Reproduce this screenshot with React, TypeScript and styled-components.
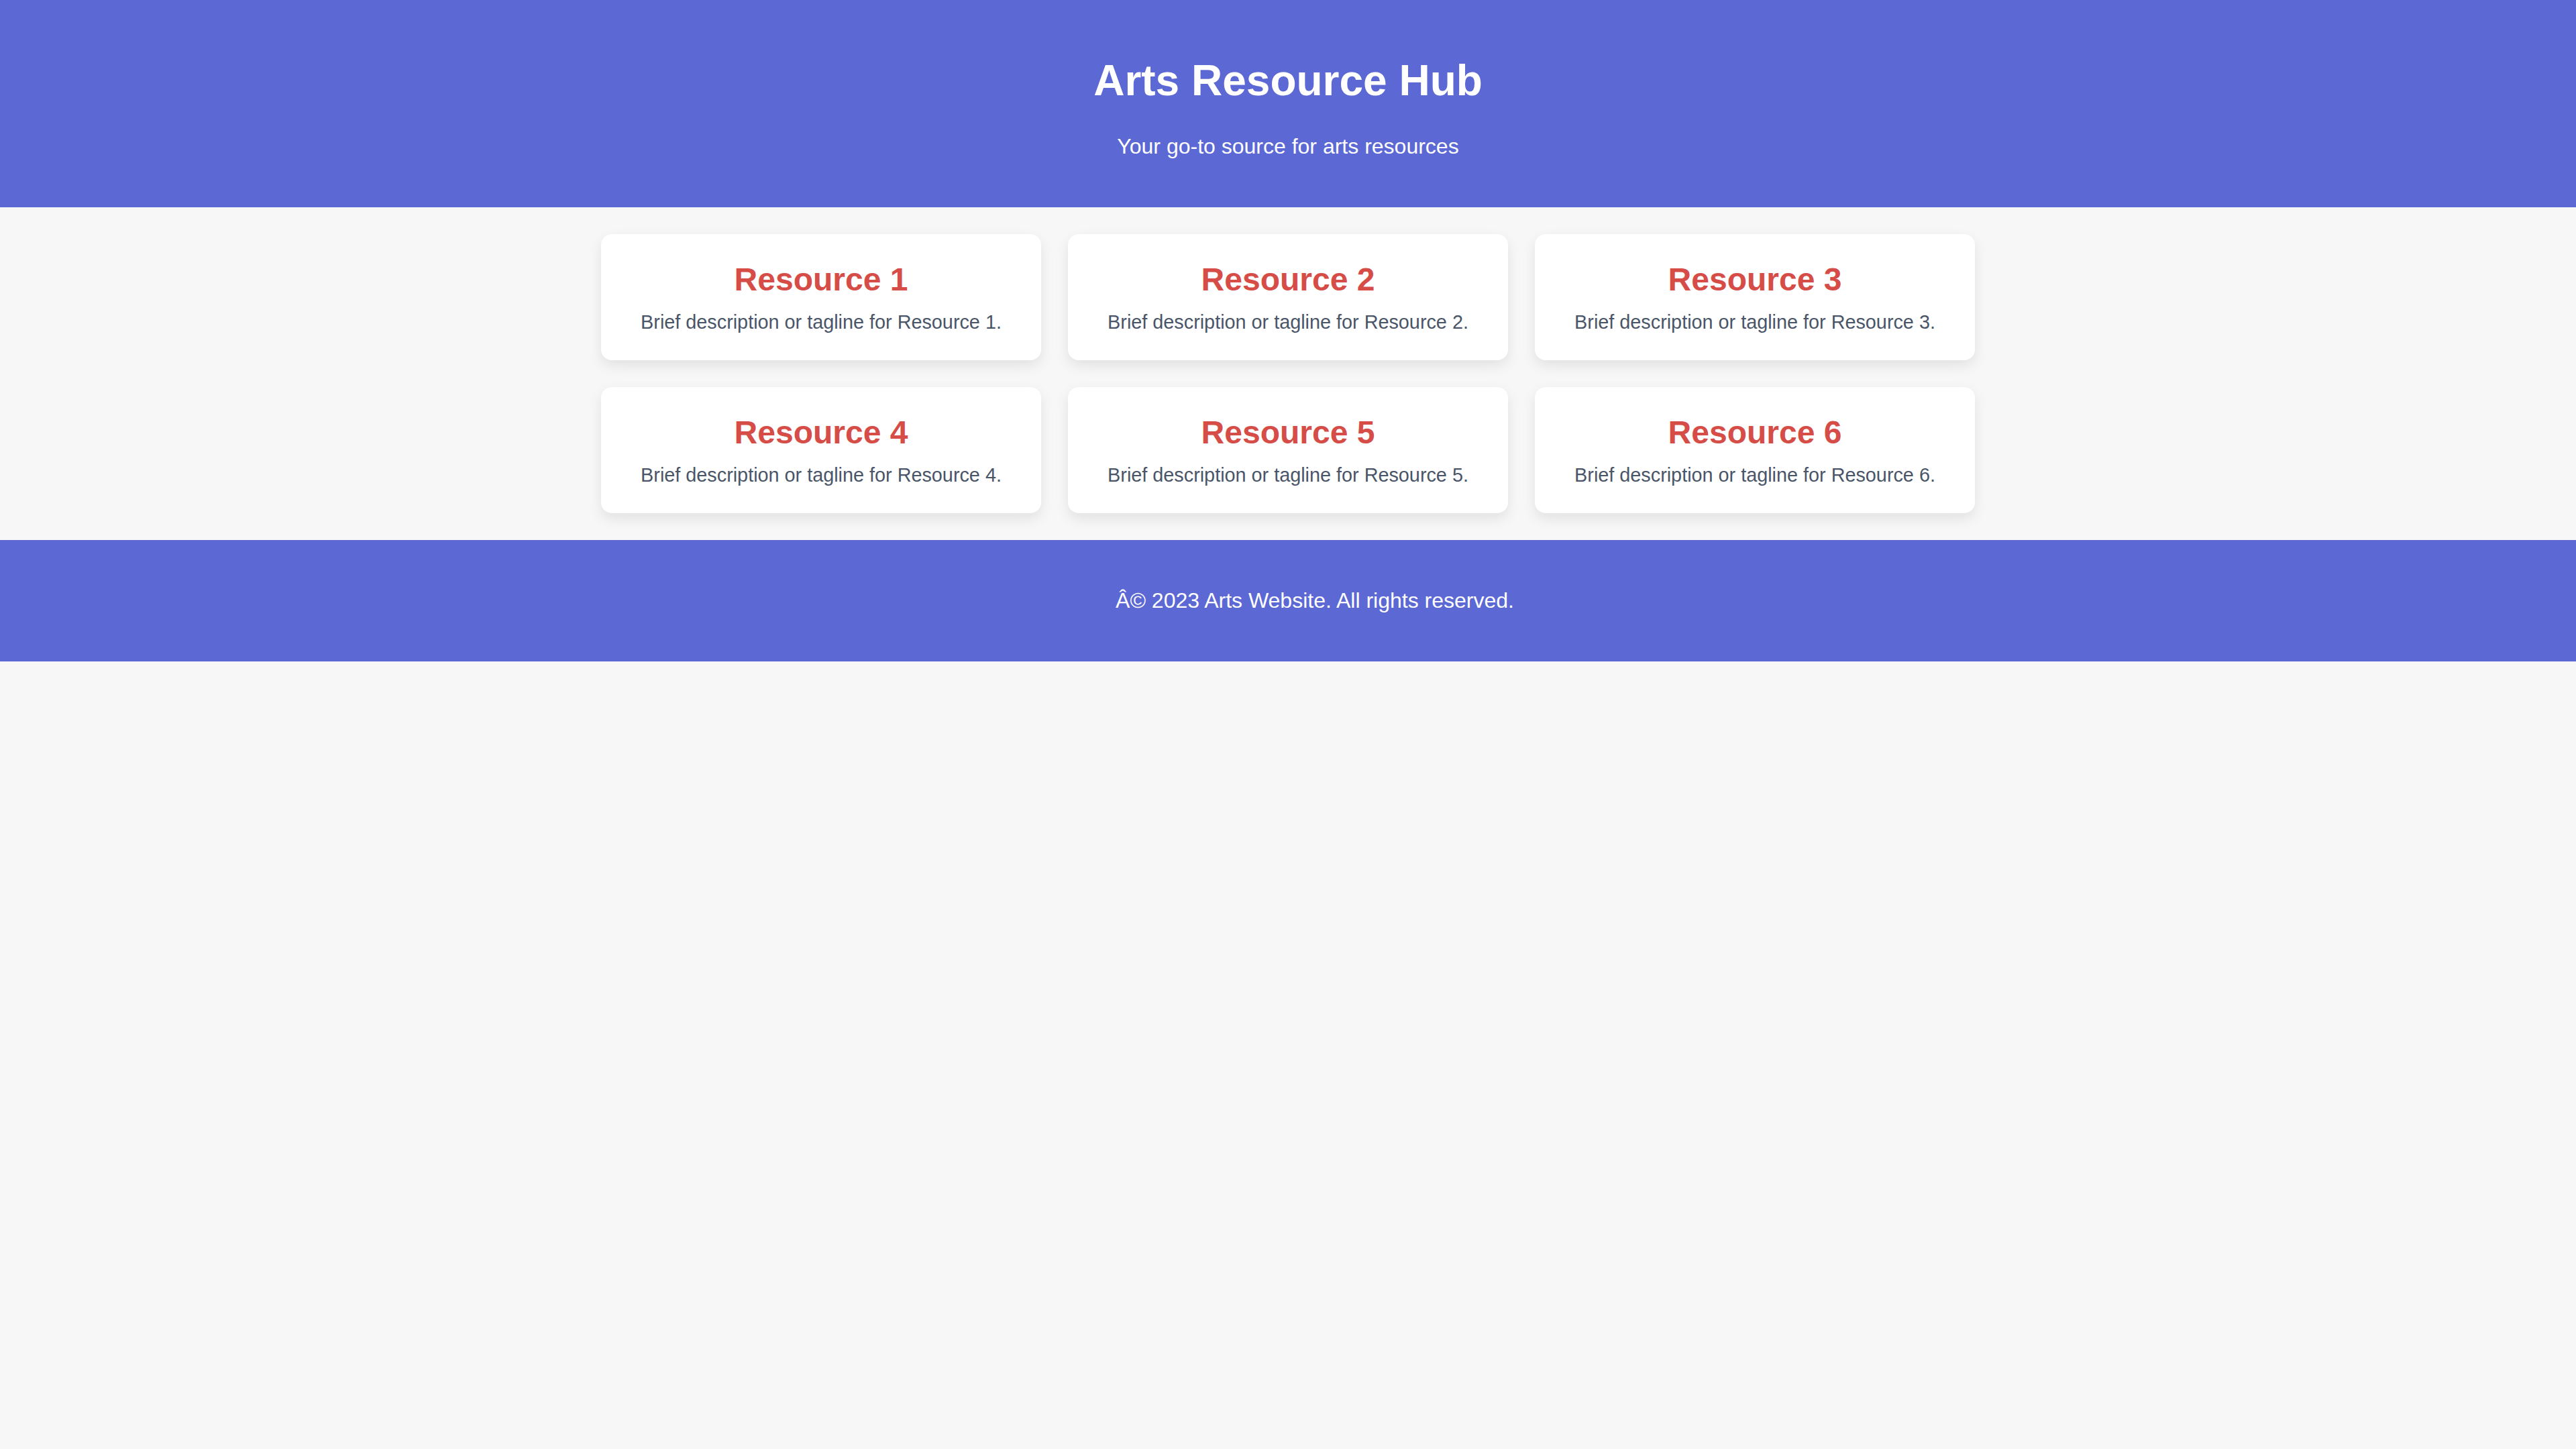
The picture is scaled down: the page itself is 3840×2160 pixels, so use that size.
import React from "react";
import styled, { createGlobalStyle } from "styled-components";

const GlobalStyle = createGlobalStyle`
  html {
    overflow-x: hidden;
  }
  body {
    margin: 0;
    background: #f7f7f7;
    font-family: "Liberation Sans", Arial, Helvetica, sans-serif;
    font-size: 32px;
    line-height: normal;
  }
`;

const Header = styled.header`
  background: #5c68d4;
  color: #ffffff;
  text-align: center;
  padding: 40px;
`;

const Title = styled.h1`
  margin: 42.88px 0;
  font-size: 64px;
  font-weight: 700;
`;

const Subtitle = styled.p`
  margin: 32px 0;
  font-size: 32px;
`;

const Main = styled.main`
  padding: 40px;
`;

const Grid = styled.section`
  max-width: 2048px;
  margin: 0 auto;
  display: grid;
  grid-template-columns: repeat(3, 1fr);
  gap: 40px;
`;

const Card = styled.article`
  background: #ffffff;
  border-radius: 16px;
  box-shadow: 0 8px 20px rgba(0, 0, 0, 0.09);
  padding: 40px;
  text-align: center;
`;

const CardTitle = styled.h2`
  margin: 0 0 20px;
  font-size: 48px;
  font-weight: 700;
  color: #d64c47;
`;

const CardText = styled.p`
  margin: 0;
  font-size: 28.8px;
  color: #4a5568;
`;

const Footer = styled.footer`
  width: 100%;
  padding: 40px;
  background: #5c68d4;
  color: #ffffff;
  text-align: center;
`;

const FooterText = styled.p`
  margin: 32px 0;
  font-size: 32px;
`;

const resources = [1, 2, 3, 4, 5, 6].map((n) => ({
  title: `Resource ${n}`,
  text: `Brief description or tagline for Resource ${n}.`,
}));

export default function App() {
  return (
    <>
      <GlobalStyle />
      <Header>
        <Title>Arts Resource Hub</Title>
        <Subtitle>Your go-to source for arts resources</Subtitle>
      </Header>
      <Main>
        <Grid>
          {resources.map((r) => (
            <Card key={r.title}>
              <CardTitle>{r.title}</CardTitle>
              <CardText>{r.text}</CardText>
            </Card>
          ))}
        </Grid>
      </Main>
      <Footer>
        <FooterText>Â© 2023 Arts Website. All rights reserved.</FooterText>
      </Footer>
    </>
  );
}
